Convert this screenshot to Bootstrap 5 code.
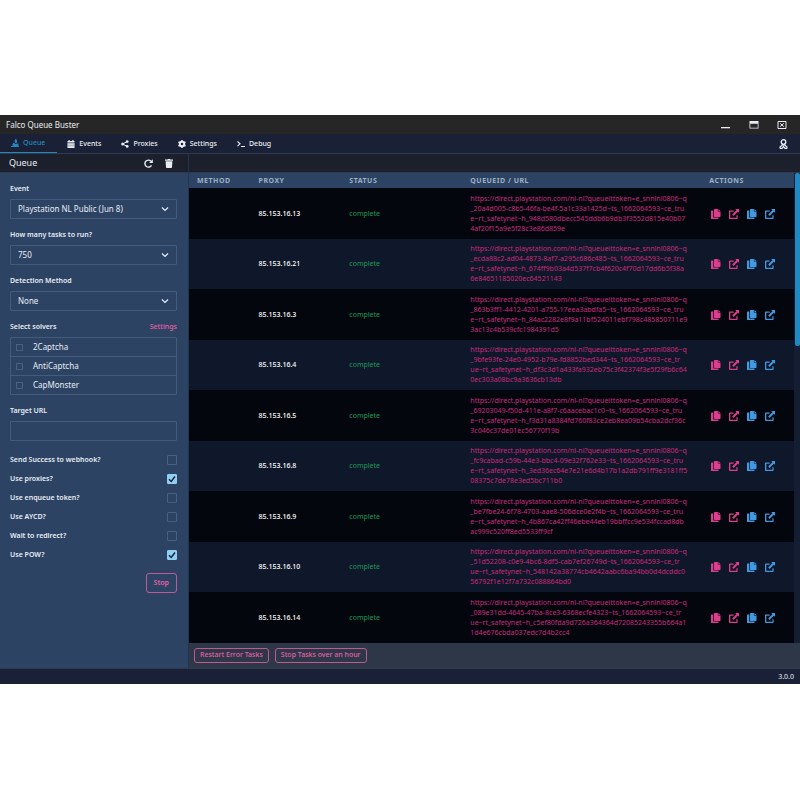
<!DOCTYPE html>
<html lang="en">
<head>
<meta charset="utf-8">
<meta name="viewport" content="width=device-width, initial-scale=1">
<title>Falco Queue Buster</title>
<link href="https://cdn.jsdelivr.net/npm/bootstrap@5.3.0/dist/css/bootstrap.min.css" rel="stylesheet">
<style>
:root{--line:#2f3b4c;--field:#465b7a;--side:#2c4364;--pink:#e65fa8;--hot:#dc3d8c;--blue:#4299e1}
body{font-family:"Noto Sans","Open Sans",sans-serif;font-size:8px;line-height:12px;color:#e8edf4;background:#fff;padding:115px 0 116px}
svg{display:block;fill:currentColor}
.ico{width:10px;height:10px}
.icon-btn{border:0;background:none;padding:0;color:inherit}
.titlebar{background:#262626;height:19px;padding:1px 13px 0 6px}
.win-controls{gap:18px}
.menubar{background:#1a2136;height:20px;border-bottom:1px solid var(--line)}
.menu-link{height:19px;padding:0 10px;gap:4px;color:#e8edf4;font-weight:500;text-decoration:none;font-size:7px}
.menu-link.current{color:#2389bd;border-bottom:1px solid #2389bd;padding:0 12px 0 11px}
.subbar{background:#1b202c;height:19px;border-bottom:1px solid var(--line)}
.side{flex:0 0 189px;background:var(--side);border-right:1px solid #22344f}
.side-form{padding:10px 11px 0 10px}
.side-form .cap{font-size:7px;font-weight:600;margin-bottom:4px;line-height:12px;display:flex;justify-content:space-between}
.field{margin-bottom:10px}
.form-select,.form-control{height:20px;padding:0 7px;font-size:8px;line-height:18px;color:#e8edf4;background-color:transparent;border:1px solid var(--field);border-radius:1px}
.form-select{background-image:none;appearance:none}
.form-select option{color:#222}
.select-box{position:relative}
.select-box svg{position:absolute;right:8px;top:6px;width:8px;height:8px;pointer-events:none}
.cap a{color:var(--pink);font-weight:500;text-decoration:none}
.solvers{border:1px solid var(--field);border-radius:1px}
.solver{height:19px;gap:10px;padding-left:5px;border-top:1px solid var(--field)}
.solver:first-child{border-top:0;height:18px}
.form-check-input[type=checkbox]{margin:0;float:none;width:10px;height:10px;border:1px solid #4a6080;border-radius:1px;background-color:transparent}
.solver .form-check-input[type=checkbox]{width:7px;height:7px;border-radius:0}
.form-check-input[type=checkbox]:checked{background-color:#90cdf4;border-color:#90cdf4;background-image:none}
.tick{position:relative;display:flex}
.tick svg{position:absolute;left:0;top:0;width:10px;height:10px;color:#1a202c;pointer-events:none}
.toggles{gap:7px;font-size:7px;font-weight:600;padding-top:3px}
.pink-btn{--bs-btn-color:var(--pink);--bs-btn-border-color:#c05a97;--bs-btn-hover-color:#fff;--bs-btn-hover-bg:#b83280;--bs-btn-padding-x:5px;--bs-btn-padding-y:0;--bs-btn-font-size:7px;--bs-btn-font-weight:500;--bs-btn-border-radius:3px;height:15px;line-height:12px}
.stop-btn{height:20px;--bs-btn-padding-x:7px;margin-top:12px;--bs-btn-font-weight:600}
.tasks{width:100%;table-layout:fixed;border-collapse:collapse}
.tasks th{background:var(--side);color:#9fb0c6;font-size:7px;font-weight:700;letter-spacing:.5px;height:15px;line-height:15px;padding:0}
.tasks td{padding:5px 0;font-size:7px}
.tasks tbody tr{background:#0f172a}
.tasks tbody tr:nth-child(odd){background:#04060d}
.tasks tbody tr:nth-child(odd) td{padding-top:6px}
.url-line{display:block;line-height:10px;white-space:nowrap;color:#c92a7c}
.proxy{font-weight:500;color:#fff}
.ok{color:#1c9a55}
.acts{gap:8px;padding-left:2px}
.hot{color:var(--hot)}.cool{color:var(--blue)}
.track{flex:0 0 6px;background:#141d31}
.thumb{height:173px;background:#1e8ac4;border-radius:2px;margin-left:1px}
.actionbar{background:#2d3748;height:25px;padding:0 5px;gap:6px;border-bottom:1px solid var(--line)}
.statusbar{background:#1a2136;height:16px;padding:0 6px;border-top:1px solid var(--line);font-size:7px}
.subbar h1{font-size:9px;font-weight:400;line-height:12px}
.side-tools{gap:12px;padding-right:15px}
</style>
<script src="https://cdn.jsdelivr.net/npm/bootstrap@5.3.0/dist/js/bootstrap.bundle.min.js"></script>
</head>
<body>
<svg width="0" height="0" class="position-absolute" aria-hidden="true">
<symbol id="copy" viewBox="0 0 10 10"><path d="M3.6 0h3.3v2.6h2.6v4.7a.6.6 0 0 1-.6.6H3.6a.6.6 0 0 1-.6-.6V.6a.6.6 0 0 1 .6-.6zM7.4 0l2.1 2.1H7.4zM.6 1.5h1.7v7.1h5.2v.8a.6.6 0 0 1-.6.6H.6a.6.6 0 0 1-.6-.6V2.1a.6.6 0 0 1 .6-.6z"/></symbol>
<symbol id="open" viewBox="0 0 10 10"><path d="M6.2 0H10v3.8L8.800 2.700 4.600 6.900 3.200 5.500 7.400 1.300zM.7 1.600H4.600v1.200H1.300v6H7.400V6.200h1.200v3.100a.7.7 0 0 1-.7.700H.7a.7.7 0 0 1-.7-.7v-7a.7.7 0 0 1 .7-.7z"/></symbol>
<symbol id="chev" viewBox="0 0 8 8"><path d="M1 2.500 4 5.500 7 2.500" fill="none" stroke="currentColor" stroke-width="1.200"/></symbol>
<symbol id="tickmark" viewBox="0 0 10 10"><path d="M2 5.300 4.200 7.400 8 2.500" fill="none" stroke="currentColor" stroke-width="1.400"/></symbol>
</svg>

<header>
<div class="titlebar d-flex align-items-center justify-content-between">
<span>Falco Queue Buster</span>
<div class="win-controls d-flex">
<button class="icon-btn" aria-label="Minimize"><svg class="ico" viewBox="0 0 10 10"><path d="M0 7h9v1.300H0z"/></svg></button>
<button class="icon-btn" aria-label="Maximize"><svg class="ico" viewBox="0 0 10 10"><path fill-rule="evenodd" d="M.5 1h9v7.500h-9zM1.300 3.700v4h7.400v-4z"/></svg></button>
<button class="icon-btn" aria-label="Close"><svg class="ico" viewBox="0 0 10 10"><path d="M1 1.500h8v7H1zM3.200 3.300l3.600 3.400M6.800 3.300 3.200 6.700" fill="none" stroke="currentColor"/></svg></button>
</div>
</div>
<nav class="menubar d-flex align-items-start">
<a href="#" class="menu-link current d-flex align-items-center"><svg width="8" height="8" viewBox="0 0 8 8"><path d="M4.200 0l1.500.5.5 2.500-1 1.500L3.500 3zM2.500 3.500l2 1.500 3-.5v2.200L4 7.300 1 6.500zM0 7h8v1H0z"/></svg>Queue</a>
<a href="#" class="menu-link d-flex align-items-center"><svg width="8" height="8" viewBox="0 0 8 8"><path fill-rule="evenodd" d="M1.500 0h1.200v1h2.600V0h1.200v1h1v1.300h-7V1h1zM.5 2.700h7V8h-7zM1.500 3.500v.8h1v-.8zM3.500 3.500v.8h1v-.8zM5.500 3.500v.8h1v-.8zM1.500 5.500v.8h1v-.8zM3.500 5.500v.8h1v-.8zM5.500 5.500v.8h1v-.8z"/></svg>Events</a>
<a href="#" class="menu-link d-flex align-items-center"><svg width="8" height="8" viewBox="0 0 8 8"><circle cx="1.700" cy="4" r="1.500"/><circle cx="6.200" cy="1.600" r="1.400"/><circle cx="6.200" cy="6.400" r="1.400"/><path d="M6.200 1.600 1.700 4l4.500 2.400" fill="none" stroke="currentColor"/></svg>Proxies</a>
<a href="#" class="menu-link d-flex align-items-center"><svg width="8" height="8" viewBox="0 0 8 8"><circle cx="4" cy="4" r="2.200" fill="none" stroke="currentColor" stroke-width="2"/><path d="M4 0v1.500M4 6.500V8M.5 2l1.300.8M6.200 5.200l1.300.8M.5 6l1.300-.8M6.200 2.800 7.500 2" stroke="currentColor" stroke-width="1.600"/></svg>Settings</a>
<a href="#" class="menu-link d-flex align-items-center"><svg width="8" height="8" viewBox="0 0 8 8"><path d="M.5 1.500 3 3.800.5 6.100M4 6.500h4" fill="none" stroke="currentColor" stroke-width="1.100"/></svg>Debug</a>
<button class="icon-btn ms-auto align-self-center me-2 px-1" aria-label="Account"><svg width="9" height="10" viewBox="0 0 9 10"><circle cx="4.500" cy="3" r="2.300" fill="none" stroke="currentColor" stroke-width="1.300"/><path d="M2.500 4.500 4.500 6l2-1.500M1 9.500V8l2.500-2M8 9.500V8L5.500 6M1 9.300h2L4.500 7.500 6 9.300h2" fill="none" stroke="currentColor" stroke-width="1.200"/></svg></button>
</nav>
</header>

<div class="d-flex">
<aside class="side">
<div class="subbar d-flex align-items-center">
<h1 class="m-0 ms-2 me-auto ps-0">&#8202;Queue</h1>
<div class="side-tools d-flex">
<button class="icon-btn" aria-label="Refresh"><svg width="9" height="9" viewBox="0 0 9 9"><path d="M7 2.200A3.500 3.500 0 1 0 7.500 6.300" fill="none" stroke="currentColor" stroke-width="1.400"/><path d="M8.800.3v3.700H5.100z"/></svg></button>
<button class="icon-btn" aria-label="Clear"><svg width="8" height="9" viewBox="0 0 8 9"><path d="M0 .6h2.500L3 0h2l.5.600H8v1.100H0zM.6 2.200h6.800L7 8.300a.8.800 0 0 1-.8.700H1.800A.8.800 0 0 1 1 8.300z"/></svg></button>
</div>
</div>
<form class="side-form">
<div class="field"><label class="cap" for="event">Event</label>
<div class="select-box"><select id="event" class="form-select"><option>Playstation NL Public (Jun 8)</option></select><svg><use href="#chev"/></svg></div></div>
<div class="field"><label class="cap" for="count">How many tasks to run?</label>
<div class="select-box"><select id="count" class="form-select"><option>750</option></select><svg><use href="#chev"/></svg></div></div>
<div class="field"><label class="cap" for="method">Detection Method</label>
<div class="select-box"><select id="method" class="form-select"><option>None</option></select><svg><use href="#chev"/></svg></div></div>
<div class="field"><div class="cap"><span>Select solvers</span><a href="#">Settings</a></div>
<div class="solvers">
<label class="solver d-flex align-items-center"><input type="checkbox" class="form-check-input">2Captcha</label>
<label class="solver d-flex align-items-center"><input type="checkbox" class="form-check-input">AntiCaptcha</label>
<label class="solver d-flex align-items-center"><input type="checkbox" class="form-check-input">CapMonster</label>
</div></div>
<div class="field"><label class="cap" for="target">Target URL</label><input id="target" type="text" class="form-control"></div>
<div class="toggles d-flex flex-column">
<label class="d-flex align-items-center justify-content-between">Send Success to webhook?<input type="checkbox" class="form-check-input"></label>
<label class="d-flex align-items-center justify-content-between">Use proxies?<span class="tick"><input type="checkbox" class="form-check-input" checked><svg><use href="#tickmark"/></svg></span></label>
<label class="d-flex align-items-center justify-content-between">Use enqueue token?<input type="checkbox" class="form-check-input"></label>
<label class="d-flex align-items-center justify-content-between">Use AYCD?<input type="checkbox" class="form-check-input"></label>
<label class="d-flex align-items-center justify-content-between">Wait to redirect?<input type="checkbox" class="form-check-input"></label>
<label class="d-flex align-items-center justify-content-between">Use POW?<span class="tick"><input type="checkbox" class="form-check-input" checked><svg><use href="#tickmark"/></svg></span></label>
</div>
<div class="text-end"><button type="button" class="btn pink-btn stop-btn">Stop</button></div>
</form>
</aside>
<main class="flex-grow-1">
<div class="subbar"></div>
<div class="d-flex">
<table class="tasks">
<colgroup><col style="width:11.500%"><col style="width:15%"><col style="width:20%"><col style="width:39.500%"><col style="width:14%"></colgroup>
<thead><tr><th class="ps-2">METHOD</th><th>PROXY</th><th>STATUS</th><th>QUEUEID / URL</th><th>ACTIONS</th></tr></thead>
<tbody id="rows"></tbody>
</table>
<div class="track"><div class="thumb"></div></div>
</div>
<div class="actionbar d-flex align-items-center">
<button class="btn pink-btn">Restart Error Tasks</button>
<button class="btn pink-btn">Stop Tasks over an hour</button>
</div>
</main>
</div>
<footer class="statusbar d-flex align-items-center justify-content-end">3.0.0</footer>

<script>
const first = "https://direct.playstation.com/nl-nl?queueittoken=e_snnlnl0806~q";
const tasks = [
["13","_20a4d005-c8b5-46fa-be4f-5a1c33a1425d~ts_1662064593~ce_tru","e~rt_safetynet~h_948d580dbecc545ddb6b9db3f3552d815e40b07","4af20f15a9e5f28c3e86d859e"],
["21","_ecda88c2-ad04-4873-8af7-a295c686c485~ts_1662064593~ce_tru","e~rt_safetynet~h_674ff9b03a4d537f7cb4f620c4f70d17dd6b5f38a","6e84651185020ec64521143"],
["3","_863b3ff1-4412-4201-a755-17eea3abdfa5~ts_1662064593~ce_tru","e~rt_safetynet~h_84ac2282e8f9a11bf524011ebf798c485850711e9","3ac13c4b539cfc1984391d5"],
["4","_9bfe93fe-24e0-4952-b79e-fd8852bed344~ts_1662064593~ce_tr","ue~rt_safetynet~h_df3c3d1a433fa932eb75c3f42374f3e5f29fb6c64","0ec303a08bc9a3636cb13db"],
["5","_69203049-f50d-411e-a8f7-c6aacebac1c0~ts_1662064593~ce_tru","e~rt_safetynet~h_f3d31a8384fd760f83ce2eb8ea09b54cba2dcf36c","3c046c37de01ec56770f19b"],
["8","_fc9cabad-c59b-44e3-bbc4-09e32f762e33~ts_1662064593~ce_tru","e~rt_safetynet~h_3ed36ec64e7e21e6d4b17b1a2db791ff9e3181ff5","08375c7de78e3ed5bc711b0"],
["9","_be7fbe24-6f78-4703-aae8-506dce0e2f4b~ts_1662064593~ce_tru","e~rt_safetynet~h_4b867ca42ff46ebe44eb19bbffcc9e534fccad8db","ac999c520ff8ed5533ff9cf"],
["10","_51d52208-c0e9-4bc6-8df5-cab7ef26749d~ts_1662064593~ce_tr","ue~rt_safetynet~h_548142a38774cb4642aabc6ba94bb0d4dcddc0","56792f1e12f7a732c088864bd0"],
["14","_089e31dd-4645-47ba-8ce3-6368ecfe4323~ts_1662064593~ce_tr","ue~rt_safetynet~h_c5ef80fda9d726a364364d72085243355b664a1","1d4e676cbda037edc7d4b2cc4"]];
const act = (tone, icon, label) => `<button class="icon-btn ${tone}" aria-label="${label}"><svg class="ico"><use href="#${icon}"/></svg></button>`;
document.getElementById("rows").innerHTML = tasks.map(([ip, ...rest]) => `<tr><td></td><td class="proxy">85.153.16.${ip}</td><td class="ok">complete</td>
<td>${[first, ...rest].map(l => `<span class="url-line">${l}</span>`).join("")}</td>
<td><div class="acts d-flex">${act("hot","copy","Copy ID")}${act("hot","open","Open ID")}${act("cool","copy","Copy URL")}${act("cool","open","Open URL")}</div></td></tr>`).join("");
</script>
</body>
</html>
